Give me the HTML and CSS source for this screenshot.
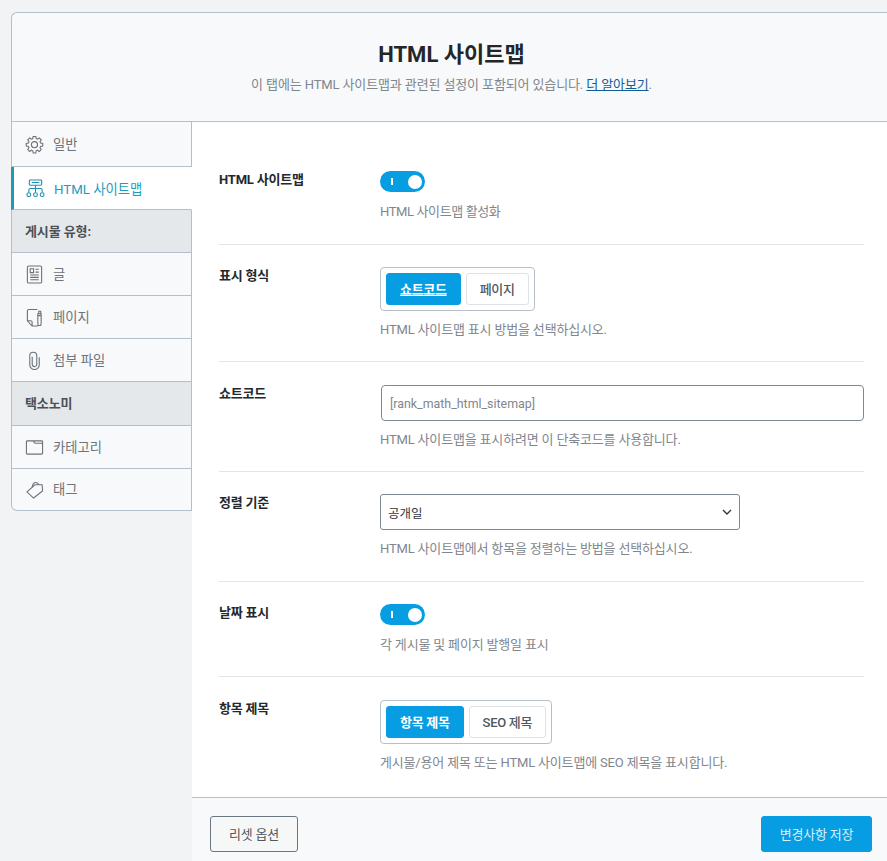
FILE: index.html
```html
<!DOCTYPE html>
<html lang="ko">
<head>
<meta charset="utf-8">
<title>HTML 사이트맵</title>
<link rel="stylesheet" href="styles.css">
</head>
<body>
<div class="panel">
  <header class="head">
    <h1>HTML 사이트맵</h1>
    <p>이 탭에는 HTML 사이트맵과 관련된 설정이 포함되어 있습니다. <a href="#">더 알아보기</a>.</p>
  </header>
  <div class="body">
    <nav class="side">
      <a class="item i1" href="#">
        <svg viewBox="0 0 20 20"><path d="M8.600 1.500h2.800l.4 2.300 1.400.6 1.900-1.300 2 2-1.300 1.900.6 1.400 2.300.4v2.800l-2.300.4-.6 1.400 1.300 1.900-2 2-1.900-1.300-1.400.6-.4 2.300H8.600l-.4-2.300-1.400-.6-1.900 1.300-2-2 1.300-1.900-.6-1.400-2.300-.4V8.800l2.300-.4.6-1.400-1.300-1.900 2-2 1.900 1.300 1.400-.6z"/><circle cx="10" cy="10.200" r="3.200"/></svg>
        <span>일반</span>
      </a>
      <a class="item active i2" href="#">
        <svg viewBox="0 0 20 20"><rect x="3.500" y="1" width="13" height="5.500" rx="1"/><path d="M6 3.700h8M10 6.500v3.500M3 14v-2.500q0-1.500 1.500-1.500h11q1.500 0 1.500 1.500V14M10 10v4"/><circle cx="3" cy="16.500" r="2"/><circle cx="10" cy="16.500" r="2"/><circle cx="17" cy="16.500" r="2"/></svg>
        <span>HTML 사이트맵</span>
      </a>
      <div class="group g1">게시물 유형:</div>
      <a class="item i3" href="#">
        <svg viewBox="0 0 20 20"><rect x="2.500" y="1" width="15" height="18" rx="1.500"/><path d="M5.500 4h3.500v4H5.500zM11 4.500h3.500M11 7.500h3.500M5.500 10.500h9M5.500 13h9M5.500 15.500h9"/></svg>
        <span>글</span>
      </a>
      <a class="item i4" href="#">
        <svg viewBox="0 0 20 20"><path d="M13 1.500H4Q2.500 1.500 2.500 3V13.500l5 5.500H13q1 0 1-1M2.500 13.500H6q1.500 0 1.500 1.500V19"/><path d="M14 18.500q-.5-1-.5-3V6h3.500v9.500q0 2-.5 3zM13.500 8h3.500M14.500 6V3.500h2V6"/></svg>
        <span>페이지</span>
      </a>
      <a class="item i5" href="#">
        <svg viewBox="0 0 20 20"><path d="M15 6.500v8a5 5 0 0 1-10 0V5a3.700 3.700 0 0 1 7.400 0v9a2.400 2.400 0 0 1-4.800 0V6"/></svg>
        <span>첨부 파일</span>
      </a>
      <div class="group g2">택소노미</div>
      <a class="item i6" href="#">
        <svg viewBox="0 0 20 20"><path d="M1.500 4q0-1 1-1h6l2 2.500h7q1 0 1 1V16q0 1-1 1h-15q-1 0-1-1zM8.500 3h9q1 0 1 1v2.500"/></svg>
        <span>카테고리</span>
      </a>
      <a class="item i7" href="#">
        <svg viewBox="0 0 20 20"><path d="M2 12.500 10.500 5H18l.5 6.500L9 19z"/><path d="M7.500 7.500C8 3 11 .5 15 5"/></svg>
        <span>태그</span>
      </a>
    </nav>
    <main class="content">
      <div class="rows">
        <section class="row r1">
          <div class="label">HTML 사이트맵</div>
          <div class="field">
            <div class="toggle"><i class="bar"></i><i class="knob"></i></div>
            <p class="desc">HTML 사이트맵 활성화</p>
          </div>
        </section>
        <section class="row r2">
          <div class="label">표시 형식</div>
          <div class="field">
            <div class="seg">
              <button class="on">쇼트코드</button>
              <button>페이지</button>
            </div>
            <p class="desc">HTML 사이트맵 표시 방법을 선택하십시오.</p>
          </div>
        </section>
        <section class="row r3">
          <div class="label">쇼트코드</div>
          <div class="field">
            <div class="input">[rank_math_html_sitemap]</div>
            <p class="desc">HTML 사이트맵을 표시하려면 이 단축코드를 사용합니다.</p>
          </div>
        </section>
        <section class="row r4">
          <div class="label">정렬 기준</div>
          <div class="field">
            <div class="select"><span>공개일</span><svg viewBox="0 0 12 8"><path d="M2 2l4 4 4-4"/></svg></div>
            <p class="desc">HTML 사이트맵에서 항목을 정렬하는 방법을 선택하십시오.</p>
          </div>
        </section>
        <section class="row r5">
          <div class="label">날짜 표시</div>
          <div class="field">
            <div class="toggle"><i class="bar"></i><i class="knob"></i></div>
            <p class="desc">각 게시물 및 페이지 발행일 표시</p>
          </div>
        </section>
        <section class="row r6">
          <div class="label">항목 제목</div>
          <div class="field">
            <div class="seg">
              <button class="on plain">항목 제목</button>
              <button>SEO 제목</button>
            </div>
            <p class="desc">게시물/용어 제목 또는 HTML 사이트맵에 SEO 제목을 표시합니다.</p>
          </div>
        </section>
      </div>
      <footer class="foot">
        <button class="reset">리셋 옵션</button>
        <button class="save">변경사항 저장</button>
      </footer>
    </main>
  </div>
</div>
</body>
</html>
```
FILE: styles.css
```css
* { box-sizing: border-box; }
html, body { margin: 0; height: 100%; overflow: hidden; }
body {
  background: #f2f3f5;
  font-family: Roboto, "Noto Sans CJK KR", sans-serif;
  color: #3c434a;
  padding: 12px 0 0 11px;
}
.panel { width: 876px; }
.head {
  height: 110px;
  background: #f8f9fa;
  border: 1px solid #b5bfc9;
  border-right: 0;
  border-radius: 6px 0 0 0;
  text-align: center;
  padding: 28px 0 0 4px;
}
.head h1 {
  margin: 0;
  font-size: 22px;
  line-height: 28px;
  font-weight: 700;
  color: #242628;
}
.head p {
  margin: 5px 0 0;
  font-size: 13px;
  line-height: 22px;
  letter-spacing: -.12px;
  color: #7f868d;
}
.head a { color: #135e96; text-decoration: underline; }
.body { display: flex; align-items: flex-start; }
.side {
  width: 181px;
  flex: none;
  background: #f8f9fa;
  border-left: 1px solid #b5bfc9;
  border-right: 1px solid #b5bfc9;
  border-bottom: 1px solid #b5bfc9;
  border-radius: 0 0 0 6px;
  display: flex;
  flex-direction: column;
}
.item {
  display: flex;
  align-items: center;
  gap: 9px;
  height: 43px;
  padding-left: 13px;
  font-size: 13.3px;
  color: #6d747b;
  text-decoration: none;
  border-bottom: 1px solid #b5bfc9;
}
.item span { padding-bottom: 2px; }
.item svg {
  width: 19px;
  height: 19px;
  flex: none;
  fill: none;
  stroke: #6b7278;
  stroke-width: 1.15;
}
.i1 { height: 45px; }
.i7 { border-bottom: 0; height: 41px; }
.active {
  background: #fff;
  color: #1d9cc0;
  margin-left: -1px;
  margin-right: -1px;
  border-left: 3px solid #1a9bb8;
  border-right: 1px solid #fff;
  padding-left: 12px;
}
.active span { padding-bottom: 0; }
.active svg { stroke: #1d8fb5; }
.group {
  height: 43px;
  display: flex;
  align-items: center;
  padding: 0 0 2px 13px;
  background: #e5e8eb;
  border-bottom: 1px solid #b5bfc9;
  font-size: 13px;
  font-weight: 700;
  letter-spacing: -.1px;
  color: #4a5056;
}
.g2 { height: 44px; }
.content {
  flex: 1;
  background: #fff;
  height: 740px;
  display: flex;
  flex-direction: column;
}
.rows { flex: none; height: 675px; padding: 28px 24px 0 27px; }
.row { display: flex; border-bottom: 1px solid #e2e4e7; }
.r6 { border-bottom: 0; }
.r1 { height: 95px; padding-top: 21px; }
.r2 { height: 117px; padding-top: 22px; }
.r3 { height: 110px; padding-top: 23px; }
.r4 { height: 110px; padding-top: 22px; }
.r5 { height: 95px; padding-top: 22px; }
.r6 { padding-top: 23px; }
.label {
  width: 161px;
  flex: none;
  font-size: 13px;
  line-height: 18px;
  font-weight: 700;
  letter-spacing: -.2px;
  color: #23282d;
}
.field { flex: 1; min-width: 0; }
.desc {
  margin: 9px 0 0;
  font-size: 13px;
  line-height: 20px;
  letter-spacing: -.17px;
  color: #7f868d;
}
.toggle + .desc { margin-top: 10px; }
.r1 .desc { letter-spacing: -.38px; }
.toggle {
  position: relative;
  width: 45px;
  height: 21px;
  border-radius: 11px;
  background: #069de3;
}
.toggle .bar {
  position: absolute;
  left: 10.5px;
  top: 7px;
  width: 2.500px;
  height: 7px;
  background: #fff;
}
.toggle .knob {
  position: absolute;
  right: 3.5px;
  top: 3.5px;
  width: 14px;
  height: 14px;
  border-radius: 50%;
  background: #fff;
}
.seg {
  display: inline-flex;
  gap: 5px;
  padding: 5px;
  border: 1px solid #b5bfc9;
  border-radius: 4px;
  background: #fff;
}
.seg button {
  height: 32px;
  padding: 0 13px;
  border: 1px solid #dfe3e7;
  border-radius: 3px;
  background: #fff;
  font: 500 13px/1 Roboto, "Noto Sans CJK KR", sans-serif;
  letter-spacing: -.3px;
  color: #50575e;
}
.seg .on {
  background: #069de3;
  border-color: #069de3;
  color: #fff;
  font-weight: 700;
  text-decoration: underline;
}
.seg .plain { text-decoration: none; }
.input {
  width: 483px;
  height: 36px;
  margin-left: 1px;
  padding-left: 8px;
  display: flex;
  align-items: center;
  border: 1px solid #7e8993;
  border-radius: 4px;
  background: #fff;
  font-size: 12.4px;
  color: #7f868d;
}
.select {
  width: 360px;
  height: 36px;
  display: flex;
  align-items: center;
  justify-content: space-between;
  padding: 0 6px 0 7px;
  border: 1px solid #7e8993;
  border-radius: 3px;
  background: #fff;
  font-size: 12.5px;
  color: #32373c;
}
.select svg {
  width: 12px;
  height: 8px;
  fill: none;
  stroke: #32373c;
  stroke-width: 1.4;
}
.foot {
  flex: 1;
  background: #f8f9fa;
  border-top: 1px solid #b5bfc9;
  display: flex;
  justify-content: space-between;
  padding: 18px 16px 0 18px;
}
.foot button {
  height: 36px;
  border-radius: 3px;
  font: 400 13px/1 Roboto, "Noto Sans CJK KR", sans-serif;
  letter-spacing: -.2px;
}
.reset {
  width: 88px;
  background: #f6f7f7;
  border: 1px solid #6b7780;
  color: #50575e;
}
.save {
  width: 111px;
  background: #069de3;
  border: 1px solid #069de3;
  color: #d7f0fb;
}
```
